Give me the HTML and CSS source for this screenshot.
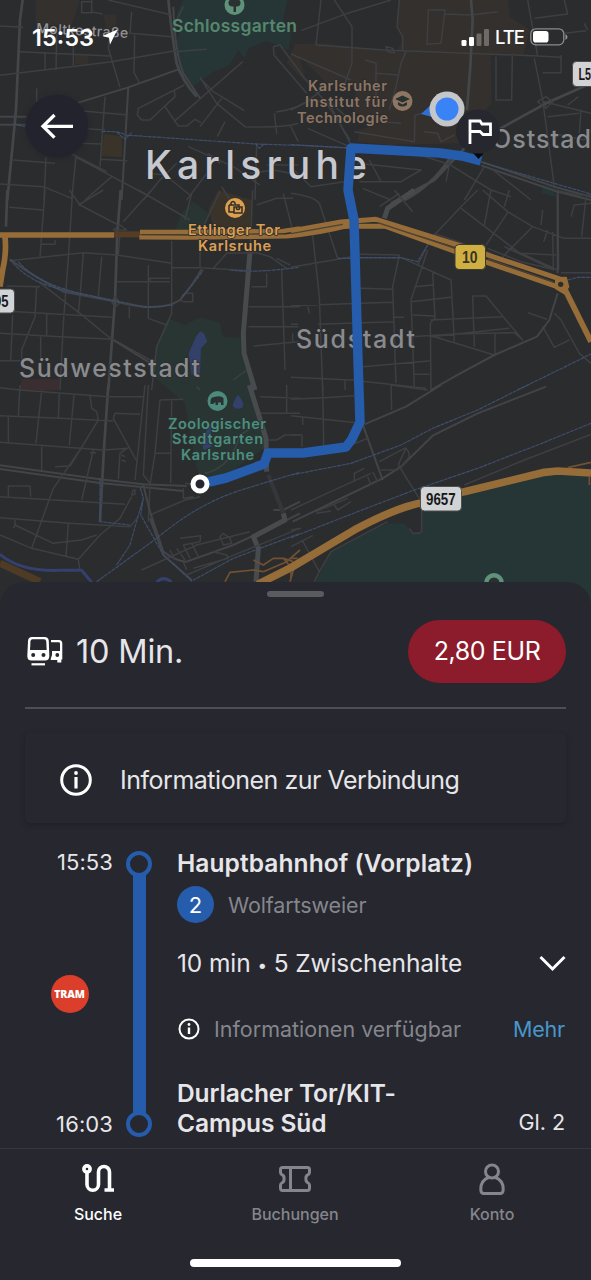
FILE: index.html
```html
<!DOCTYPE html>
<html lang="de">
<head>
<meta charset="utf-8">
<title>Verbindung</title>
<link rel="stylesheet" href="styles.css">
</head>
<body>
<div class="screen">
  <section class="map">
    <svg class="map-canvas" width="591" height="620" viewBox="0 0 591 620">
      <!-- land use -->
      <g transform="scale(.33333)">
        <path class="campus" d="M107 0H240L215 75H107ZM310 45L350 42V75L320 100ZM225 165H265V192H225Z"/>
        <path class="park" d="M550 0H862L850 60L875 100L865 150L800 122L745 145L733 175L715 150L690 195L640 215L580 258L545 210L528 130L545 80L530 40Z"/>
        <path class="shop" d="M312 402L366 408V472L303 468Z"/>
        <path class="campus" d="M885 132L980 130L1060 142L1190 155L1205 120L1192 75L1198 0H1523L1530 50L1590 90L1570 165H1472L1475 310L1410 375L1380 430L1170 435L1072 425L1078 390L1120 375L1060 330L1070 260L980 250L900 170L920 250L860 190Z"/>
        <path class="park" d="M1630 555L1665 560L1668 590L1623 580Z"/>
      </g>
      <g transform="translate(0 190) scale(.33333)">
        <path class="shop" d="M655 0L755 30L750 120L640 105L625 60Z"/>
        <path class="zoo" d="M548 65L580 35L625 70L600 130H520Z"/>
        <path class="zoo" d="M503 385L555 405L600 382L660 398L668 440L725 445L722 490L760 600L800 770L700 840L610 870L590 835L555 640L462 560V510L475 450Z"/>
        <path class="water" d="M600 424L612 430L622 455L603 475L600 550L575 555L566 490L588 440Z"/>
        <path class="water" d="M714 614Q736 640 728 652Q714 662 700 650Q695 640 714 614ZM620 720L632 705L635 770L612 780L605 760Z"/>
        <path class="med" d="M65 568H178V600L150 600H60Z"/>
      </g>
      <g transform="translate(291 385) scale(.33333)">
        <path class="forest" d="M60 620L120 500L290 415L340 415L365 445H392V360L520 320L760 270H900V720H0Z"/>
      </g>

      <!-- streets -->
      <g class="streets" transform="scale(.33333)">
        <path class="s3" d="M68 0L60 60L48 330L22 600M505 0Q515 100 530 190Q545 240 590 290"/>
        <path class="s2" d="M520 20Q525 160 550 220L600 295M385 260L365 600M0 350H80M0 374H80M235 308L385 262L535 208"/>
        <path d="M0 78L70 82M0 226L330 186L525 152M60 155L330 168M170 100L168 210M135 155V212M220 130V195M245 5H275V38H245ZM275 0V36L308 42M325 0L515 45M395 35L390 100L515 110M330 105L325 145L360 262M404 105L402 218L418 248M110 265V305M315 290L300 500M240 332L385 345M235 385L315 390M240 430L305 432M302 478L382 482M40 480L165 490M138 470L132 600M0 552L130 560L215 595M225 470L440 585M215 462L320 515M228 470L215 600M335 530L255 600M440 520L495 525L570 585M530 490L480 540L430 600M565 440L700 500L780 555M620 520L560 600M520 155L620 148M553 255L415 325L412 345L425 360H450L525 290L523 270M495 320L535 378H560L585 358L603 368M600 232L650 310L735 380Q850 385 895 370M728 185L522 365M665 295L600 380M600 235L640 275L733 332M550 20L525 70M675 365L652 410M823 340L830 402M800 495H895M625 460L660 490M750 520L820 510L900 525M665 560L690 600M770 430L765 600M870 375L895 425"/>
        <path d="M820 140L840 135L910 230L980 310L1050 420M820 140L822 165L920 280M828 336Q890 330 940 290L980 260"/>
        <path class="rail" d="M40 372L75 380M305 395Q360 392 375 405L770 432L895 436L1050 444M350 396L375 418L395 398M765 430L778 445L795 430"/>
      </g>
      <g class="streets" transform="translate(291) scale(.33333)">
        <path d="M90 0L75 135L280 150L740 168L810 172M30 92L175 38L300 0M130 0L183 80V190L160 255L155 275M325 0L318 80L335 110V155M285 140L305 145L310 158L290 155ZM412 30H462L450 130L408 133ZM462 42L540 45L620 35M345 155L330 190L315 260L295 330M222 180L255 190V220L320 225M255 220V290M615 170V300H662L664 168M730 175L755 300L790 560M710 0L740 168M820 0L830 42L730 55M810 165V218H755M0 162L180 240M0 330L60 300L120 310L178 360M50 385L175 440M120 320L178 430M190 395L370 425L372 345L395 340M270 365L330 370M398 395L440 400L450 425L490 405M820 100L885 92M880 70L890 90M758 305L900 340M755 300L765 320M830 315L862 290M770 350L865 340M870 330L865 400M785 400L880 420L900 390"/>
        <path class="s3" d="M540 0L545 60L538 200L528 330M480 470Q420 560 340 600M900 250L765 310L520 445L430 540L300 610"/>
        <path class="s2" d="M570 485L790 560L900 590M570 496L790 572L900 600"/>
        <path d="M200 490L390 510L330 545H205M235 480L270 545M310 440L480 495M480 470L465 545M470 490L600 570L660 590M580 500L520 600M215 565L300 600M0 500L60 560L160 545M600 505L720 600"/>
        <path d="M740 305L765 290L785 305L765 325Z"/>
        <path class="rail" d="M0 434L180 444M575 488L900 582"/>
      </g>
      <g class="streets" transform="translate(0 190) scale(.33333)">
        <path class="s3" d="M22 0L18 110M362 0L352 130L345 330L325 600"/>
        <path class="s5" d="M750 185L730 430L732 490L765 600"/>
        <path d="M758 0L750 190"/>
        <path d="M28 52L130 60M135 0L120 200M208 0L240 45L355 105M235 45L310 0M218 0L205 205L190 400L180 600M455 0L370 95M415 0L570 90M575 10L555 90M660 5L600 130V230M770 45L830 25H880M850 10L875 110M165 150V163H125M30 212L250 188L350 195L515 220V370L500 405L470 470L455 600M350 275H510M445 225V385L500 405M510 265H450V275M515 233H600L750 242M250 190L240 320L235 370M305 200L295 320M20 288L120 290M0 362L335 382M0 430L180 440L340 448M110 290L105 380L65 480V520M38 375L32 510M140 370V435M122 440V510M388 350V385M115 275L240 370L325 440L450 510M360 130L355 195M515 152V225M640 235L680 190L770 188L810 200L860 235M540 330L555 310H578V335H550ZM755 290H800V250M745 350H900M745 410H895M845 240L855 540M760 468L895 455M740 540L700 570M0 512H60M600 600L590 590M830 205L870 225"/>
        <path d="M340 120L360 105L380 120ZM335 335L345 320L360 338L345 352Z"/>
        <path class="s2" d="M30 208Q100 260 190 305L350 335Q480 370 540 330Q575 290 605 238M340 450L460 525"/>
        <path class="rail" d="M30 208Q80 275 190 300L330 330M545 320Q575 290 610 240M690 240Q760 250 895 232"/>
        <path class="rail" d="M55 215Q110 280 240 310L440 352L520 345"/>
      </g>
      <g class="streets" transform="translate(291 190) scale(.33333)">
        <path class="s5" d="M280 85L290 55L370 0"/>
        <path d="M0 10Q70 20 85 40L140 205M65 135L85 320L95 600M0 232L140 208L180 200M180 192L325 195L305 290L315 580M205 203H330L380 225L480 270L490 455M380 225L410 165L430 135L510 50L560 0M410 180L360 330L370 590M425 245L432 385L418 400L420 600M370 290L425 285M360 335L480 322M365 375L430 378M210 295L305 298M0 347L210 340L305 337M80 403L310 395M0 403H22M50 350L55 370M5 430V455M305 382H340M418 390L635 380M430 440L610 495M360 440L490 432L670 428L695 450L585 318H545L550 470M420 440L655 415M612 430V492M215 530L420 512M370 553H415M0 562L180 570L405 595M162 570V600M510 55L680 185L800 240M575 0L650 65L725 110L820 145H900M600 0L580 105M655 0L640 50M652 65L585 165M725 110L635 200M755 60L750 105M770 120L758 155M785 125L787 235M840 80L850 45L900 40M885 20L872 140M690 190L795 195M265 50L310 20L325 10M310 0L365 65M800 0L803 240M590 175L690 215L785 238M430 130L600 190M640 170L790 240M810 248H900M710 368L768 388M755 410L790 472L835 450M790 370L810 390L865 490L900 520M790 0L860 15H900"/>
        <path class="s2" d="M800 310L775 390L738 440L610 495L490 560L420 600M800 0V250"/>
        <path class="rail" d="M205 203H330L380 215L410 165M830 270L860 262H900M680 600L900 492M140 205H180"/>
      </g>
      <g class="streets" transform="translate(0 385) scale(.33333)">
        <path class="s3" d="M325 0L312 190L300 410"/>
        <path class="s2" d="M0 241L300 283L430 298L560 303M0 252L300 294L550 318"/>
        <path d="M0 8L60 15L325 35H430M60 0L55 95M125 15L108 175M178 25L175 100M222 30L208 180M270 30L275 70L290 80L295 105M0 92L180 100L340 108M0 172L310 195L385 190M25 95V172M345 85L420 88M345 85L340 100L408 225M295 105L240 195L160 310L95 490M125 185V255M280 195L245 345M165 245L210 243L240 195M288 203H270M380 190L360 205L355 282M365 210L375 215M365 225L378 230M0 335L375 358M25 335V303H90L92 335M0 398L210 415L390 425L415 395M45 400V420L160 475L245 465L290 450M40 430L48 415M205 415L198 515M0 450L95 490L235 523L240 555M235 523L300 450L360 400L395 335M400 315L395 330L405 328L405 315ZM435 0L405 285M445 0L430 270L450 295M480 45L550 43M480 45L465 205L450 300M515 45L512 295M465 205H515M450 300L445 410M550 310V340L580 335M450 390L555 345L600 335M780 35L900 40M860 0V85M780 85H900M805 165H830L855 150H900M555 295L590 300M600 265L590 280M615 265Q690 250 720 150L745 135"/>
        <path class="s2" d="M430 300L450 380L490 500Q530 530 560 530L700 480L850 410L870 400L900 385M450 400L490 510L575 585M820 375H850L900 350"/>
        <path class="s5" d="M748 0L798 160L800 260M850 385L855 405L760 455L775 490L768 590"/>
        <path class="dim" d="M805 270L850 385"/>
        <path d="M425 555L590 480L750 440M560 570L690 515L900 430M560 555L550 530M540 460L602 452L600 470L550 480L570 520M660 455L670 445L690 460L695 475L670 480ZM530 490L555 525M575 475L595 515M510 495L525 525M640 500L680 510L685 520L580 550"/>
        <path class="rail" d="M290 590L470 460Q600 350 740 310Q820 285 900 262M350 540L390 480L415 390L430 340L420 305M430 340L422 390L490 510L575 588L700 520L900 445M300 280V410L390 420"/>
      </g>
      <g class="streets" transform="translate(291 385) scale(.33333)">
        <path class="s2" d="M450 0L345 65L220 118M215 118L275 285M5 410L140 345L275 280L330 245L425 152L560 85L765 5"/>
        <path d="M0 92L210 115M0 43L100 38L190 32M95 0L98 180M0 150H33V185M35 95V120M0 375L140 310L240 265M300 0L302 75M300 0L410 15M180 180L230 160M190 290V265L220 250M230 275L240 300M245 260L260 290M270 255H320M322 238L345 190Q355 200 355 215L330 245M322 238Q340 270 385 340M265 230L345 188M75 380L170 340M75 385L120 378M130 360L140 375L180 350M0 435L30 430M0 485L65 452M35 468L85 560L70 590M85 560L120 500L290 410M392 370V440L385 445H365L355 430M520 300L700 225L900 148"/>
        <path class="rail" d="M0 270L180 235L330 180L425 130L560 75L710 0M0 458L200 380L370 315L560 250L760 172L900 115"/>
      </g>

      <!-- main roads -->
      <g class="main" transform="translate(0 190) scale(.33333)">
        <path class="tunnel" d="M342 133L425 133"/>
        <path class="m16" d="M0 135H342"/>
        <path class="m14" d="M420 126H560L850 123L900 115M418 142L560 143L860 139Q960 130 1043 108"/>
        <path class="m16" d="M15 140Q20 190 8 240L0 290"/>
      </g>
      <g class="main" transform="translate(291 190) scale(.33333)">
        <path class="m13" d="M0 123L150 96L255 88L500 165L810 268M0 136L150 109L280 108L500 187L805 292"/>
        <path class="m16" d="M818 290L900 455"/>
        <path class="join" d="M795 265L825 263L832 290L820 310L795 295Z"/>
        <path class="gap" d="M0 131L155 103M260 98L500 177M590 207L790 277"/>
        <circle class="hole" cx="809" cy="283" r="8"/>
      </g>
      <g class="main" transform="translate(0 385) scale(.33333)">
        <path class="tunnel wide" d="M0 535L120 590"/>
        <path class="river" d="M0 508Q60 560 180 556H245L275 592M470 592Q490 570 515 592"/>
        <path class="ramp" d="M675 590L690 562L760 555L790 560M760 525L790 540L820 520H850L880 555L870 590M790 560L860 530L900 495M850 520L880 530"/>
      </g>
      <g class="main" transform="translate(291 385) scale(.33333)">
        <path class="m22" d="M-100 598L0 548L190 435Q320 365 400 352L520 320L760 262L800 258L900 264"/>
        <path class="ramp" d="M830 248L900 232M0 520H20M0 580V560M895 275V300"/>
      </g>

      <!-- points of interest -->
      <g class="poi">
        <circle class="fill-park" cx="234.500" cy="5" r="10"/>
        <path class="ink" d="M233.500 12V6.500Q229 7 228.500 3.500Q228 1 231-1H238Q241 1 240.500 3.500Q240 7 236 6.500V12Z"/>
        <circle class="fill-brown" cx="402.500" cy="101" r="10"/>
        <path class="ink" d="M395 99L402.500 95.500L410 99L402.500 102.500ZM398 102L402.500 104.500L407 102V105Q402.500 108 398 105Z"/>
        <circle class="fill-gold" cx="235" cy="208" r="10"/>
        <path class="ink-line" d="M229 205H234M231 205V203Q233 200 235 203V205H239V207M229 205V212H234M234 207H242V213H234ZM236 208Q238 211 240 208"/>
        <circle class="fill-zoo" cx="217.500" cy="401" r="10"/>
        <path class="ink" d="M210.500 403Q210 397 214 397Q221 395 223.500 398V405H221V402.500H218V405H215.500V402L213 404H210.500Z"/>
        <circle class="fill-park" cx="494" cy="583" r="10"/>
        <circle class="ink" cx="494" cy="583" r="5.500"/>
      </g>

      <!-- labels -->
      <g class="labels">
        <text class="street" x="36" y="33" textLength="92" transform="rotate(3 36 33)">Moltkestraße</text>
        <text class="park-name" x="172" y="32" textLength="125">Schlossgarten</text>
        <text class="inst" x="308" y="91" textLength="79">Karlsruher</text>
        <text class="inst" x="305" y="106.500" textLength="82">Institut für</text>
        <text class="inst" x="297" y="122.500" textLength="91">Technologie</text>
        <text class="city" x="145" y="178.500" textLength="222">Karlsruhe</text>
        <text class="tor" x="188" y="235" textLength="92">Ettlinger Tor</text>
        <text class="tor" x="198" y="250.500" textLength="73">Karlsruhe</text>
        <text class="area" x="19" y="377" textLength="181">Südweststadt</text>
        <text class="area" x="296" y="347.500" textLength="119">Südstadt</text>
        <text class="area" x="492" y="148" textLength="99">Oststad</text>
        <text class="zoo-name" x="168" y="428.500" textLength="98">Zoologischer</text>
        <text class="zoo-name" x="172" y="444" textLength="91">Stadtgarten</text>
        <text class="zoo-name" x="181" y="459.500" textLength="73">Karlsruhe</text>
      </g>

      <!-- route -->
      <path class="route" d="M200 484L226 478L264 464L268 453L303 453L346 447L352 439L360 422L358 360L354 220L348 190L351 148L440 153L462 156L481 161"/>
      <circle class="start" cx="200" cy="484" r="7"/>

      <!-- road shields -->
      <g class="shields">
        <rect class="shield" x="572.500" y="61.500" width="40" height="25" rx="4"/>
        <text class="shield-text" x="578.500" y="79.500" textLength="12.500" lengthAdjust="spacingAndGlyphs">L5</text>
        <rect class="shield" x="-30" y="289" width="44.500" height="24" rx="4"/>
        <text class="shield-text" x="-6" y="306.500" textLength="14.500" lengthAdjust="spacingAndGlyphs">95</text>
        <rect class="shield" x="420.500" y="486.500" width="41" height="24.500" rx="4"/>
        <text class="shield-text" x="426" y="504.500" textLength="29.500" lengthAdjust="spacingAndGlyphs">9657</text>
        <rect class="shield gold" x="455" y="244.500" width="30.500" height="25" rx="4"/>
        <text class="shield-text on-gold" x="462" y="262.500" textLength="15.500" lengthAdjust="spacingAndGlyphs">10</text>
      </g>

      <!-- user position and destination pin -->
      <path class="heading" d="M421 114L433 103L436 118Z"/>
      <circle class="me-ring" cx="447" cy="109" r="17.500"/>
      <circle class="me" cx="447" cy="109" r="11.500"/>
      <circle class="pin" cx="478" cy="131.500" r="22"/>
      <path class="pin-tip" d="M473.500 153.500H483.500L478.500 159Z"/>
      <path class="flag" d="M470 144V121H480L482 124H490.500V134.500H483L480 131.500H471"/>
    </svg>
    <header class="status">
      <div class="clock"><span class="time">15:53</span>
        <svg width="16" height="16" viewBox="0 0 16 16"><path fill="#fff" d="M15.500.5L8 15.500L7 8.700L.5 7Z"/></svg>
      </div>
      <div class="signal">
        <svg width="28" height="17" viewBox="0 0 28 17"><g fill="#fff"><rect x=".5" y="11" width="5" height="6" rx="1.300"/><rect x="8" y="8" width="5" height="9" rx="1.300"/><g opacity=".28"><rect x="15.500" y="4.500" width="5" height="12.500" rx="1.300"/><rect x="23" y="0" width="5" height="17" rx="1.300"/></g></g></svg>
        <span class="lte">LTE</span>
        <svg width="38" height="18" viewBox="0 0 38 18"><rect x=".8" y=".8" width="33" height="16" rx="5" fill="none" stroke="#fff" stroke-opacity=".45" stroke-width="1.300"/><rect x="3" y="3" width="15.500" height="11.500" rx="2.800" fill="#fff"/><path d="M35.500 6Q37.500 7.500 37.500 9Q37.500 10.500 35.500 12Z" fill="#fff" opacity=".5"/></svg>
      </div>
    </header>
    <button class="back" aria-label="Zurück"><svg width="62" height="62" viewBox="0 0 62 62"><path d="M47 31.300H17.500M28.500 20L17 31.300L28.500 42.600" fill="none" stroke="#fff" stroke-width="3.300"/></svg></button>
  </section>

  <main class="sheet">
    <div class="grip"></div>
    <div class="summary">
      <svg class="modes" width="36" height="29" viewBox="0 0 36 29">
        <path fill="#fff" d="M5 0H17.500Q21.500 0 21.800 4L22.300 19Q22.300 23.500 18 23.500H4.500Q.3 23.500.3 19L1 4Q1.200 0 5 0Z"/>
        <path fill="#26272f" d="M5.500 2.200H17Q19 2.200 19.200 4.200L19.700 13H3L3.500 4.200Q3.700 2.200 5.500 2.200Z"/>
        <circle cx="6.200" cy="18" r="2" fill="#26272f"/><circle cx="16.500" cy="18" r="2" fill="#26272f"/>
        <path d="M4.500 27.300H18" stroke="#fff" stroke-width="2.200"/>
        <path fill="#fff" d="M24 3H32Q35.300 3 35.300 6.500V22.500H34.300V25.500H30.300V23H23.800V21.500L25 18V14H33V6.500Q33 5.200 31.500 5.200H24Z"/>
        <circle cx="30.300" cy="18" r="1.900" fill="#26272f"/>
      </svg>
      <h1 class="duration">10 Min.</h1>
      <button class="price"><span>2,80 EUR</span></button>
    </div>
    <div class="notice">
      <svg width="32" height="32" viewBox="0 0 32 32"><circle cx="16" cy="16" r="14.300" fill="none" stroke="#fff" stroke-width="3"/><path d="M16 13V24.500" stroke="#fff" stroke-width="3.200"/><circle cx="16" cy="9" r="1.900" fill="#fff"/></svg>
      <span class="notice-text">Informationen zur Verbindung</span>
    </div>
    <div class="leg">
      <div class="times"><span>15:53</span><b class="tram">TRAM</b><span>16:03</span></div>
      <div class="track"><i></i><u></u><i></i></div>
      <div class="details">
        <h2 class="from">Hauptbahnhof (Vorplatz)</h2>
        <div class="line"><span class="badge">2</span><span class="dest">Wolfartsweier</span></div>
        <div class="stops"><span class="stop-text">10 min <small>•</small> 5 Zwischenhalte</span><svg width="27" height="17" viewBox="0 0 27 17"><path d="M1.500 2L13.500 14L25.500 2" fill="none" stroke="#fff" stroke-width="3"/></svg></div>
        <div class="info"><svg width="22" height="22" viewBox="0 0 22 22"><circle cx="11" cy="11" r="9.500" fill="none" stroke="#fff" stroke-width="2"/><path d="M11 9.500V16" stroke="#fff" stroke-width="2.400"/><circle cx="11" cy="6.500" r="1.400" fill="#fff"/></svg><span class="info-text">Informationen verfügbar</span><a class="more">Mehr</a></div>
        <div class="arrival"><h2><span class="to1">Durlacher Tor/KIT-</span><br><span class="to2">Campus Süd</span></h2><span class="platform">Gl. 2</span></div>
      </div>
    </div>
    <nav class="tabs">
      <div class="tab active"><svg width="34" height="34" viewBox="0 0 34 34"><g fill="none" stroke="currentColor" stroke-width="3.600"><circle cx="6" cy="7" r="3.100"/><path d="M6 10V22.500A5.700 5.700 0 0 0 17.500 22.500V10A5.500 5.500 0 0 1 28.500 10V28M23.500 28H33"/></g></svg><span class="t1">Suche</span></div>
      <div class="tab"><svg width="34" height="34" viewBox="0 0 34 34"><path d="M4.500 5.500H29.500Q31.500 5.500 31.500 7.500V10.500Q31.500 12 29.500 13Q27.500 14.500 28 16.500Q27.500 19 29.500 20.500Q31.500 21.500 31.500 23V26Q31.500 28.500 29.500 28.500H4.500Q2.500 28.500 2.500 26V23Q2.500 21.500 4.500 20.500Q6.500 19 6 16.500Q6.500 14.500 4.500 13Q2.500 12 2.500 10.500V7.500Q2.500 5.500 4.500 5.500ZM12.500 5.500V28.500" fill="none" stroke="currentColor" stroke-width="3"/></svg><span class="t2">Buchungen</span></div>
      <div class="tab"><svg width="34" height="34" viewBox="0 0 34 34"><g fill="none" stroke="currentColor" stroke-width="3"><circle cx="17" cy="9.500" r="6.500"/><path d="M13.500 15.500Q5.800 18.500 5.800 27Q5.800 31.500 8.800 31.500H25.200Q28.200 31.500 28.200 27Q28.200 18.500 20.500 15.500"/></g></svg><span class="t3">Konto</span></div>
    </nav>
    <div class="home"></div>
  </main>
</div>
</body>
</html>
```
FILE: styles.css
```css
* { box-sizing: border-box; }
body { margin: 0; background: #26272f; color: #e6e6e9; font-family: Inter, "Liberation Sans", sans-serif; }
h1, h2 { margin: 0; font-weight: inherit; }
button { border: 0; padding: 0; font: inherit; color: inherit; }
svg { display: block; flex: none; }
span { white-space: nowrap; }
.screen { width: 591px; height: 1280px; overflow: hidden; }

/* map */
.map { position: relative; height: 620px; background: #2b2c2e; }
.campus { fill: #34302d; }
.park { fill: #263636; }
.forest { fill: #263535; }
.zoo { fill: #293533; }
.shop { fill: #39332a; }
.med { fill: #3a2e31; }
.water { fill: #32406a; }
.streets path { fill: none; stroke: #3d3f42; stroke-width: 4.5; stroke-linejoin: round; }
.streets .s2 { stroke: #424447; stroke-width: 6; }
.streets .s3 { stroke: #44474a; stroke-width: 8; }
.streets .s5 { stroke: #484b4e; stroke-width: 15; }
.streets .dim { stroke: #353639; stroke-width: 13; }
.streets .rail { stroke: #3f4e6c; stroke-width: 3.5; stroke-dasharray: 12 2; }
.main path { fill: none; stroke: #966c38; stroke-linejoin: round; }
.main .m13 { stroke-width: 15; }
.main .m14 { stroke-width: 13; }
.main .m16 { stroke-width: 17; }
.main .m22 { stroke-width: 23; }
.main .tunnel { stroke: #553d25; stroke-width: 18; }
.main .wide { stroke: #4e3b26; stroke-width: 22; }
.main .ramp { stroke: #705232; stroke-width: 5; }
.main .river { stroke: #34406e; stroke-width: 9; }
.main .join { fill: #966c38; stroke-width: 6; }
.main .gap { stroke: #4c4335; stroke-width: 4; }
.hole { fill: #2b2c2e; }
.fill-park { fill: #5f917b; }
.fill-zoo { fill: #4c8b7c; }
.fill-brown { fill: #8e7663; }
.fill-gold { fill: #dda052; }
.ink { fill: #293230; }
.ink-line { fill: none; stroke: #302c25; stroke-width: 1.5; }
.labels text { font-weight: 500; paint-order: stroke; stroke: #2b2c2e; stroke-width: 1.500px; stroke-linejoin: round; }
.labels .street { fill: #929396; font-size: 14px; }
.labels .park-name { fill: #55876f; font-size: 17.500px; font-weight: 600; stroke: none; }
.labels .inst { fill: #8e7663; font-size: 14.500px; font-weight: 600; }
.labels .city { fill: #c6c8d0; font-size: 39px; }
.labels .tor { fill: #dda052; font-size: 14.500px; font-weight: 600; }
.labels .area { fill: #898b8f; font-size: 25px; }
.labels .zoo-name { fill: #4c8f7f; font-size: 14.500px; font-weight: 600; stroke: #293533; }
.route { fill: none; stroke: #255cab; stroke-width: 9.500; stroke-linejoin: round; }
.start { fill: #26272f; stroke: #fff; stroke-width: 5; }
.shield { fill: #d2d3d5; stroke: #4c4d50; stroke-width: 1; }
.shield.gold { fill: #cfae42; stroke: #3c3a30; }
.shield-text { fill: #17181a; font: bold 16px "Liberation Sans", sans-serif; }
.shield-text.on-gold { fill: #3a3424; }
.heading { fill: #2f70d0; }
.me-ring { fill: #c5c6ca; }
.me { fill: #3a83f7; }
.pin { fill: #26272f; }
.pin-tip { fill: #08080a; }
.flag { fill: none; stroke: #fff; stroke-width: 2.8; }
.status { position: absolute; inset: 0 0 auto; height: 74px; padding: 0 23px 0 32px; display: flex; justify-content: space-between; align-items: center; color: #fff; }
.clock, .signal { display: flex; align-items: center; }
.clock { gap: 8px; }
.time { font-size: 23.500px; font-weight: 600; }
.signal { gap: 6px; }
.lte { font-size: 18.500px; font-weight: 500; letter-spacing: -1px; }
.back { position: absolute; left: 26px; top: 95px; width: 62px; height: 62px; border-radius: 50%; background: #22232d; box-shadow: 0 1px 5px #22232d; }

/* sheet */
.sheet { position: relative; height: 698px; margin-top: -38px; padding: 9px 0 0; background: #26272f; border-radius: 24px 24px 0 0; display: flex; flex-direction: column; }
.grip { width: 57px; height: 6px; border-radius: 3px; background: #5a5b5f; align-self: center; flex: none; }
.summary { height: 112px; margin: 0 25px; padding: 22.500px 0 0 2px; border-bottom: 2px solid #4e4f55; display: flex; align-items: flex-start; }
.modes { margin-top: 17px; }
.duration { margin-left: 13px; flex: 1; line-height: 64px; font-size: 32.500px; letter-spacing: -.2px; }
.price { width: 158px; height: 63px; border-radius: 32px; background: #8c1c2b; color: #fff; font-size: 25px; letter-spacing: -.4px; }
.notice { height: 90px; margin: 24px 25px 0; padding: 4px 0 0 35px; border-radius: 5px; display: flex; align-items: center; gap: 28px; box-shadow: 0 2px 5px #1f2027; font-size: 25px; letter-spacing: -.48px; }
.leg { display: flex; height: 325px; padding: 22px 26px 0 0; }
.times { width: 113px; height: 297px; display: flex; flex-direction: column; justify-content: space-between; align-items: flex-end; font-size: 22px; line-height: 35px; letter-spacing: .1px; }
.tram { width: 38px; height: 38px; border-radius: 50%; background: #db3f2c; margin-right: 24.500px; color: #fff; font: 800 10.500px/38px "Open Sans", sans-serif; letter-spacing: -.1px; text-align: center; }
.track { width: 26px; margin-left: 13px; padding-top: 6px; height: 292px; display: flex; flex-direction: column; align-items: center; }
.track i { width: 26px; height: 26px; border: 4.500px solid #255cab; border-radius: 50%; flex: none; }
.track u { flex: 1; width: 13px; margin: -2px 0; background: #255cab; }
.details { flex: 1; margin-left: 25px; display: flex; flex-direction: column; }
.details h2 { font-size: 24.500px; font-weight: 600; line-height: 30px; }
.from { height: 41px; padding-top: 3px; letter-spacing: .08px; }
.line { display: flex; align-items: center; gap: 14px; height: 37px; }
.badge { width: 37px; height: 37px; border-radius: 50%; background: #255cab; color: #fff; font-size: 22px; line-height: 38px; text-align: center; }
.dest { color: #85868b; font-size: 21.500px; letter-spacing: -.12px; }
.stops { height: 40px; margin-top: 20px; display: flex; align-items: center; justify-content: space-between; font-size: 24.500px; letter-spacing: -.1px; }
.stops small { font-size: 17px; vertical-align: 1px; }
.stops svg { margin-right: -1px; }
.info { display: flex; align-items: center; height: 30px; margin-top: 31px; font-size: 21.500px; }
.info svg { margin-left: 1px; }
.info-text { margin-left: 14px; color: #85868b; flex: 1; }
.more { color: #4897ca; letter-spacing: -.2px; }
.arrival { display: flex; justify-content: space-between; align-items: flex-end; margin-top: 34px; }
.arrival h2 { letter-spacing: -.1px; }
.platform { font-size: 21.500px; line-height: 32px; }
.tabs { border-top: 1px solid #35363e; height: 111px; display: flex; justify-content: space-between; }
.tab { width: 197px; padding: 13px 1px 0 0; display: flex; flex-direction: column; align-items: center; color: #85868b; font-size: 16px; font-weight: 500; }
.tab span { margin-top: 7px; line-height: 22px; }
.tab.active { color: #fff; }
.home { width: 211px; height: 8px; border-radius: 4px; background: #fff; align-self: center; flex: none; }
```
